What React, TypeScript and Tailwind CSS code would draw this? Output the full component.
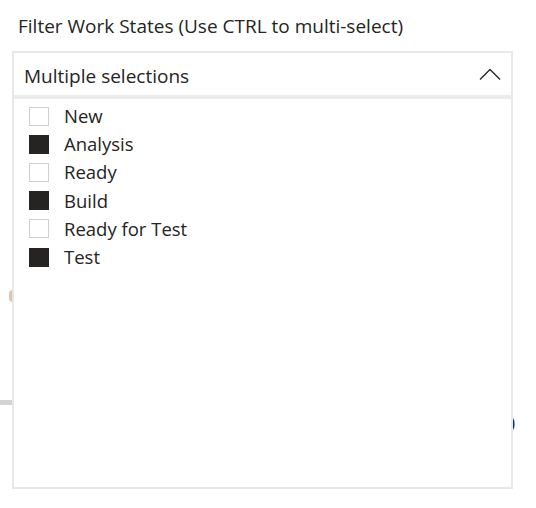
import React from "react";

const items: { label: string; checked: boolean }[] = [
  { label: "New", checked: false },
  { label: "Analysis", checked: true },
  { label: "Ready", checked: false },
  { label: "Build", checked: true },
  { label: "Ready for Test", checked: false },
  { label: "Test", checked: true },
];

export default function App() {
  return (
    <div
      className="relative w-[536px] h-[508px] bg-white overflow-hidden text-[#252423]"
      style={{ fontFamily: '"Open Sans", "Noto Sans", sans-serif' }}
    >
      {/* underlying content peeking out behind the dropdown */}
      <div className="absolute left-[9px] top-[290px] w-[4px] h-[12px] rounded-l-full bg-[#d9c8b0]" />
      <div className="absolute left-0 top-[400px] w-[12px] h-[5px] bg-[#d4d4d4]" />
      <div className="absolute left-[504px] top-[411px] text-[20px] leading-[26px] text-[#252423]">0</div>

      <div className="relative flex flex-col">
        <div className="pl-[18px] pt-[13px] h-[51px] text-[19px] leading-[26px]">
          Filter Work States (Use CTRL to multi-select)
        </div>
        <div className="ml-[12px] w-[501px] h-[438px] border-2 border-[#e8e8e8] bg-white flex flex-col">
          <div className="h-[42px] flex items-center justify-between pl-[10px] pr-[10px] text-[19px]">
            <span className="leading-[24px] pt-[4px]">Multiple selections</span>
            <svg width="22" height="12" viewBox="0 0 22 12">
              <path d="M1 11.5 L11 1.5 L21 11.5" fill="none" stroke="#252423" strokeWidth="1.3" />
            </svg>
          </div>
          <div className="h-[4px] bg-[#ececec]" />
          <div className="flex flex-col pt-[3px]">
            {items.map((it) => (
              <div key={it.label} className="h-[28.2px] flex items-center pl-[15px]">
                <div
                  className={
                    it.checked
                      ? "w-[20px] h-[19px] bg-[#252423]"
                      : "w-[20px] h-[19px] border border-[#cfcfcf] bg-white"
                  }
                />
                <span className="ml-[15px] text-[18.5px] leading-[24px]">{it.label}</span>
              </div>
            ))}
          </div>
        </div>
      </div>
    </div>
  );
}
